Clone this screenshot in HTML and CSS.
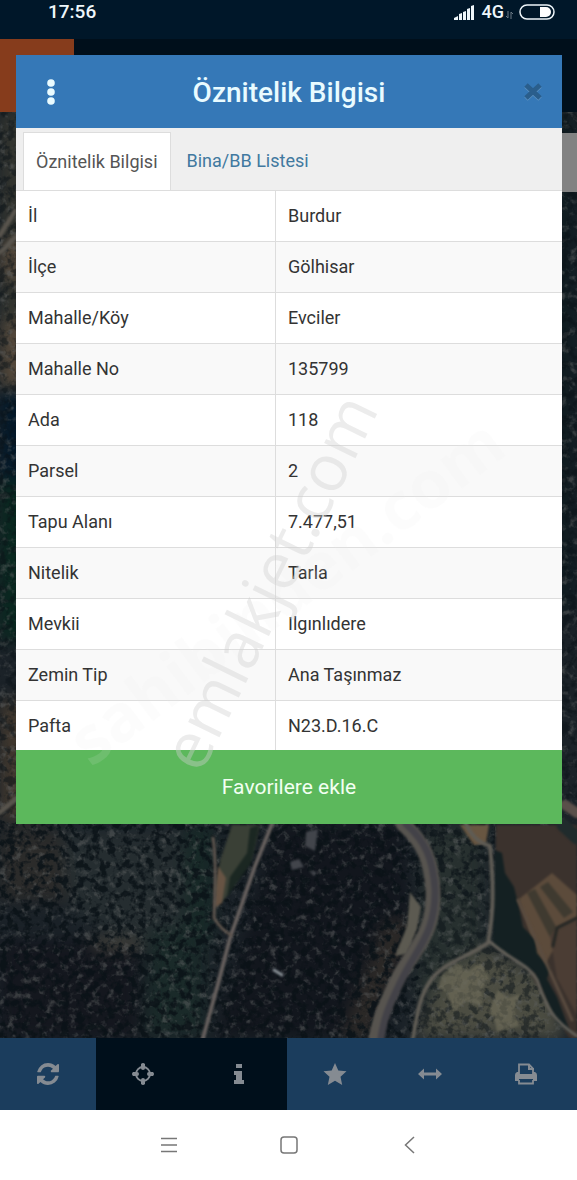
FILE: index.html
```html
<!DOCTYPE html>
<html lang="tr">
<head>
<meta charset="utf-8">
<meta name="viewport" content="width=device-width, initial-scale=1">
<title>Öznitelik Bilgisi</title>
<link rel="stylesheet" href="styles.css">
</head>
<body>
<div class="screen">
  <div class="backdrop">
    <header class="status-bar">
      <span class="clock">17:56</span>
      <span class="indicators">
        <svg class="signal" viewBox="0 0 20 15" aria-hidden="true"><path d="M0 15v-2l4-2v4zM5 15v-6l3-1v7zM9 15V7l3-1v9zM13 15V4l3-1v12zM17 15V1l3-1v15z"/></svg>
        <span class="network">4G</span>
        <svg class="traffic" viewBox="0 0 7 8" aria-hidden="true"><path d="M2 0v7M0 5l2 2M5 8V1l2 2"/></svg>
        <svg class="battery" viewBox="0 0 36 16" aria-hidden="true"><rect x="1" y="1" width="34" height="14" rx="7" fill="none" stroke="#eef6fa" stroke-width="1.5"/><path d="M21 3h6a5 5 0 0 1 0 10h-6z" fill="#fff"/></svg>
      </span>
    </header>
    <div class="app-bar"><div class="app-mark"></div></div>
    <div class="map">
      <svg class="terrain" viewBox="0 112 577 926" preserveAspectRatio="xMidYMid slice" aria-hidden="true">
        <defs>
          <filter id="trees" x="0" y="0" width="100%" height="100%" color-interpolation-filters="sRGB">
            <feTurbulence type="fractalNoise" baseFrequency="0.13" numOctaves="3" seed="7"/>
            <feColorMatrix values="0 0 0 0 .37  0 0 0 0 .38  0 0 0 0 .38  4 0 0 0 -2.1"/>
          </filter>
          <filter id="shade" x="0" y="0" width="100%" height="100%" color-interpolation-filters="sRGB">
            <feTurbulence type="fractalNoise" baseFrequency="0.13" numOctaves="3" seed="21"/>
            <feColorMatrix values="0 0 0 0 .04  0 0 0 0 .07  0 0 0 0 .09  0 5 0 0 -2.3"/>
          </filter>
          <filter id="soft" color-interpolation-filters="sRGB"><feGaussianBlur stdDeviation="8"/></filter>
          <filter id="edge" color-interpolation-filters="sRGB"><feGaussianBlur stdDeviation="0.8"/></filter>
        </defs>
        <rect y="112" width="577" height="926" fill="#1b2228"/>
        <g filter="url(#soft)">
          <path d="M0 112h40v230H0z" fill="#33352f"/>
          <path d="M0 240h30v40H0zM0 320h40v70H0z" fill="#53483a"/>
          <path d="M0 390h35v90H0z" fill="#03192a"/>
          <path d="M0 480h35v160H0z" fill="#08281f"/>
          <path d="M0 700h40v120H0z" fill="#41382e"/>
          <path d="M540 112h37v500h-37z" fill="#101c21"/>
          <path d="M0 830h90v70H0z" fill="#2b2b2a"/>
          <path d="M60 830h120l20 100-60 20-70-40z" fill="#252d30"/>
          <path d="M150 930l55-5v110h-60z" fill="#1a2a29"/>
          <path d="M185 825h28v115h-28z" fill="#172927"/>
          <path d="M0 940h140v98H0z" fill="#14171e"/>
          <path d="M90 938l50 0v12H95z" fill="#49463e"/>
          <path d="M275 825h125l15 120-40 93H215z" fill="#12161d"/>
          <path d="M385 920h30l-45 118h-30z" fill="#2c2927"/>
          <path d="M425 825h60v130l-70 50z" fill="#27302f"/>
          <path d="M440 972l45-25 60 30 20 61H415z" fill="#4c4d42"/>
        </g>
        <rect y="112" width="577" height="926" filter="url(#trees)" opacity=".5"/>
        <rect x="415" y="900" width="130" height="138" filter="url(#shade)" opacity=".5"/>
        <rect y="820" width="420" height="218" filter="url(#shade)" opacity=".85"/>
        <rect x="420" y="820" width="75" height="80" filter="url(#shade)" opacity=".7"/>
        <rect y="112" width="577" height="708" filter="url(#shade)" opacity=".5"/>
        <g filter="url(#edge)">
          <path d="M232 825h28l-8 35-22 32-11 14-5-17 7-31z" fill="#3a4036"/>
          <path d="M250 828l9-3-8 38-24 34 3-20 17-24z" fill="#1b2722"/>
          <path d="M218 866l8 12-4 25-8 5z" fill="#675444"/>
          <path d="M496 825h81v213h-8l-36-60-38-72z" fill="#3b322d"/>
          <path d="M519 899l33-26 25 22v37l-25 20-10 18z" fill="#5c4b3b"/>
          <path d="M527 893l8-4 24 43-8 7zM540 887l8-5 25 30-9 6z" fill="#3f3a30"/>
          <path d="M558 926l19-9v98l-20-37-7-42z" fill="#4b3d34"/>
          <path d="M460 825h29l-3 18-12 2z" fill="#685641"/>
          <path d="M495 850l7 3 3 20 9 14 5 20 4 20 12 12 2 14 13 16-3 10 10 18 14 37-14-12-22-48-42-30z" fill="#142022"/>
          <path d="M410 892l11 15-4 22-10 25-12 2 12-30z" fill="#5c5a51"/>
          <path d="M306 832l12-3-3 22-10-5zM290 862l9-3 5 8-12 3zM309 871l8 1-3 4z" fill="#42454b"/>
          <path d="M443 973l14-10 12 8 12-9 8 17-8 11 3 17-18-6-12 11-7-20-9-4zM498 990l10 8 12-4-6 16 5 16-22 6-3-16-6-3z" fill="#77735f" opacity=".55"/>
        </g>
        <g fill="none" stroke-linecap="round" filter="url(#edge)">
          <path d="M272 824l-17 42-25 72-12 46-15 54" stroke="#655f5d" stroke-width="4"/>
          <path d="M213 838c4 25 2 55 1 80 5 8 9 13 17 17" stroke="#5e554e" stroke-width="3"/>
          <path d="M403 824c20 18 28 35 30 65 2 42-16 57-33 86-17 34-20 44-24 63" stroke="#57544f" stroke-width="15"/>
          <path d="M406 824c20 18 27 35 29 65 1 42-16 57-31 86-17 34-20 44-23 63" stroke="#434248" stroke-width="7"/>
          <path d="M465 822c8 18 18 22 25 24 5 50 2 75-2 97-22 15-45 20-57 37-12 17-14 36-18 58" stroke="#5f5c55" stroke-width="4"/>
          <path d="M489 941c25 22 38 22 48 39 8 22 12 38 40 56" stroke="#625f58" stroke-width="3"/>
          <path d="M518 900l17 38 17 38 20 44" stroke="#5b4d41" stroke-width="3"/>
          <path d="M577 918l-20 10-4 18" stroke="#252724" stroke-width="3"/>
          <path d="M274 970l8 5" stroke="#8b9298" stroke-width="3"/>
          <path d="M0 235l15-24M0 252c8-5 12-14 17-15M0 812l16-13" stroke="#58544d" stroke-width="5"/>
          <path d="M563 825l14 13" stroke="#202b2c" stroke-width="13"/>
          <path d="M565 805l12 8" stroke="#5a4f4a" stroke-width="10"/>
        </g>
      </svg>
      <div class="side-panel"></div>
    </div>
  </div>

  <main class="dialog-layer">
    <section class="dialog" aria-labelledby="dialog-title">
      <header class="dialog-header">
        <button class="icon-button" type="button" aria-label="Menü"><svg class="dots" viewBox="0 0 8 26"><circle cx="4" cy="4" r="3.8"/><circle cx="4" cy="13" r="3.8"/><circle cx="4" cy="22" r="3.8"/></svg></button>
        <h1 id="dialog-title">Öznitelik Bilgisi</h1>
        <button class="icon-button" type="button" aria-label="Kapat"><svg class="close" viewBox="0 0 20 20"><path d="M3 4l14 13M17 4L3 17" stroke="#5d91c0"/><path d="M3 3l14 13M17 3L3 16" stroke="#2a5e8c"/></svg></button>
      </header>
      <nav class="tabs">
        <button class="tab active" type="button">Öznitelik Bilgisi</button>
        <button class="tab" type="button">Bina/BB Listesi</button>
      </nav>
      <table class="attributes">
        <tbody>
          <tr><th scope="row">İl</th><td>Burdur</td></tr>
          <tr><th scope="row">İlçe</th><td>Gölhisar</td></tr>
          <tr><th scope="row">Mahalle/Köy</th><td>Evciler</td></tr>
          <tr><th scope="row">Mahalle No</th><td>135799</td></tr>
          <tr><th scope="row">Ada</th><td>118</td></tr>
          <tr><th scope="row">Parsel</th><td>2</td></tr>
          <tr><th scope="row">Tapu Alanı</th><td>7.477,51</td></tr>
          <tr><th scope="row">Nitelik</th><td>Tarla</td></tr>
          <tr><th scope="row">Mevkii</th><td>Ilgınlıdere</td></tr>
          <tr><th scope="row">Zemin Tip</th><td>Ana Taşınmaz</td></tr>
          <tr><th scope="row">Pafta</th><td>N23.D.16.C</td></tr>
        </tbody>
      </table>
      <button class="favorite" type="button">Favorilere ekle</button>
      <svg class="watermark" viewBox="16 55 546 769" aria-hidden="true">
        <text class="mark-main" transform="translate(201 775) rotate(-64)">emlakjet.com</text>
        <text class="mark-faint" transform="translate(91 768) rotate(-37)">sahibinden.com</text>
      </svg>
    </section>
  </main>
</div>

<nav class="toolbar">
  <button class="tool" type="button" aria-label="Yenile"><svg viewBox="0 0 1536 1536"><path d="M1511 928q0 5-1 7-64 268-268 434.500t-478 166.500q-146 0-282.500-55t-243.500-157l-129 129q-19 19-45 19t-45-19-19-45v-448q0-26 19-45t45-19h448q26 0 45 19t19 45-19 45l-137 137q71 66 161 102t187 36q134 0 250-65t186-179q11-17 53-117 8-23 30-23h192q13 0 22.500 9.500t9.500 22.500zm25-800v448q0 26-19 45t-45 19h-448q-26 0-45-19t-19-45 19-45l138-138q-148-137-349-137-134 0-250 65t-186 179q-11 17-53 117-8 23-30 23h-199q-13 0-22.500-9.500t-9.500-22.500v-7q65-268 270-434.500t480-166.500q146 0 284 55.500t245 156.500l130-129q19-19 45-19t45 19 19 45z"/></svg></button>
  <button class="tool dark" type="button" aria-label="Konum"><svg viewBox="0 0 22 22"><circle cx="11" cy="11" r="7" fill="none" stroke="#858b92" stroke-width="1.8"/><path d="M9 1q2-2 4 0v4q0 2-2 2t-2-2zM9 17q0-2 2-2t2 2v4q-2 2-4 0zM1 9h4q2 0 2 2t-2 2H1q-2-2 0-4zM17 9h4q2 2 0 4h-4q-2 0-2-2t2-2z"/></svg></button>
  <button class="tool dark" type="button" aria-label="Bilgi"><svg viewBox="0 0 22 22"><path d="M8 1h6v4H8zM6 8h8v9h2v4H6v-4h2v-5H6z"/></svg></button>
  <button class="tool" type="button" aria-label="Favoriler"><svg class="star" viewBox="0 0 24 24"><path d="M12 1l3.300 7.400 8.200.9-6 5.500 1.700 8.200-7.200-4.200L4.800 23l1.700-8.200-6-5.500 8.200-.9z"/></svg></button>
  <button class="tool" type="button" aria-label="Ölç"><svg class="measure" viewBox="0 0 26 22"><path d="M1 11l6-5.500v4h12v-4l6 5.500-6 5.500v-4H7v4z"/></svg></button>
  <button class="tool" type="button" aria-label="Yazdır"><svg class="print" viewBox="0 0 24 22"><path d="M5 11V1.500h10l4 4V11M5 17v3.500h14V17" fill="none" stroke="#858b92" stroke-width="1.800"/><path d="M14 1h2v4h4v2h-6zM3 9h2v2h14V9h2q2 1 2 3v6h-4v-2H5v2H1v-6q0-2 2-3z"/></svg></button>
</nav>
<nav class="system-nav">
  <button type="button" aria-label="Son uygulamalar"><svg viewBox="0 0 18 18"><path d="M1 2.500h16M1 9h16M1 15.500h16"/></svg></button>
  <button type="button" aria-label="Ana ekran"><svg viewBox="0 0 18 18"><rect x="1" y="1" width="16" height="16" rx="3"/></svg></button>
  <button type="button" aria-label="Geri"><svg viewBox="0 0 18 18"><path d="M14 1L5.500 9l8.500 8"/></svg></button>
</nav>
</body>
</html>
```

FILE: styles.css
```css
* { box-sizing: border-box; }

body {
  margin: 0;
  min-height: 100vh;
  display: flex;
  flex-direction: column;
  background: #fff;
  color: #333;
  font-family: Roboto, "Noto Sans", sans-serif;
  font-size: 18px;
  line-height: 24px;
}

button {
  margin: 0;
  padding: 0;
  border: 0;
  background: none;
  color: inherit;
  font: inherit;
}

svg { display: block; }

.screen {
  flex: 1;
  display: grid;
  overflow: hidden;
}

.backdrop, .dialog-layer { grid-area: 1 / 1; min-width: 0; }

.backdrop {
  display: flex;
  flex-direction: column;
  background: #000f1b;
}

.status-bar {
  display: flex;
  justify-content: space-between;
  height: 39px;
  padding: 0 22px 0 48px;
  background: #001729;
  color: #eef6fa;
  font-weight: 500;
}

.clock { font-size: 19px; }

.indicators {
  display: flex;
  align-items: center;
  height: 24px;
}

.signal { width: 20px; height: 15px; margin-right: 8px; fill: #eef6fa; }
.traffic { width: 7px; height: 8px; margin: 6px 6px 0 2px; fill: none; stroke: #6c7b86; }
.battery { width: 36px; height: 16px; }

.app-bar { height: 73px; background: #000f1b; }
.app-mark { width: 74px; height: 100%; background: #863c1c; }

.map { position: relative; flex: 1; background: #1b2228; }
.terrain { position: absolute; inset: 0; width: 100%; height: 100%; }

.side-panel {
  position: absolute;
  top: 21px;
  right: 0;
  width: 40px;
  height: 59px;
  background: #828282;
}

.dialog-layer { z-index: 1; padding: 55px 15px 24px 16px; }

.dialog { position: relative; background: #fff; }

.dialog-header {
  display: grid;
  grid-template-columns: 64px 1fr 64px;
  align-items: center;
  height: 73px;
  background: #3578b7;
  color: #e9fbff;
}

.dialog-header h1 {
  margin: 0;
  padding-top: 2px;
  text-align: center;
  font-size: 28px;
  font-weight: 500;
  line-height: 36px;
}

.icon-button {
  display: grid;
  place-items: center;
  height: 72px;
  padding-left: 6px;
}

.dots { width: 8px; height: 26px; fill: #e9fbff; }
.close { width: 20px; height: 20px; fill: none; stroke-width: 5; }

.tabs {
  display: flex;
  height: 63px;
  padding: 4px 7px 0;
  border-bottom: 1px solid #ddd;
  background: #efefef;
}

.tab {
  height: 58px;
  padding: 0 16px;
  color: #41799f;
}

.tab.active {
  padding: 0 12px;
  border: 1px solid #ddd;
  border-bottom: 0;
  background: #fff;
  color: #555;
}

.attributes {
  width: 100%;
  table-layout: fixed;
  border-spacing: 0;
}

.attributes th, .attributes td {
  height: 51px;
  padding: 0 12px;
  border-bottom: 1px solid #ddd;
  font-weight: 400;
  text-align: left;
}

.attributes th { width: 260px; border-right: 1px solid #ddd; }
.attributes tr:nth-child(even) { background: #f9f9f9; }
.attributes tr:last-child th, .attributes tr:last-child td { height: 49px; border-bottom: 0; }

.favorite {
  display: block;
  width: 100%;
  height: 74px;
  background: #5cb85c;
  color: #f2fff2;
  font-size: 21px;
}

.watermark {
  position: absolute;
  inset: 0;
  width: 100%;
  height: 100%;
  pointer-events: none;
}

.mark-main { font: 65px "Open Sans", sans-serif; fill: #d0d0d0; opacity: .4; }
.mark-faint { font: 700 66px "Open Sans", sans-serif; fill: #ececec; opacity: .12; }

.toolbar {
  display: grid;
  grid-template-columns: repeat(6, 1fr);
  height: 72px;
  padding-right: 3px;
  background: #1b3d5d;
}

.tool { display: grid; place-items: center; }
.tool.dark { background: #000f1b; }
.tool svg { width: 22px; height: 22px; fill: #858b92; }
.tool .star { width: 24px; height: 24px; }
.tool .measure { width: 26px; }
.tool .print { width: 24px; }

.system-nav {
  display: flex;
  justify-content: center;
  gap: 102px;
  height: 70px;
}

.system-nav svg {
  width: 18px;
  height: 18px;
  fill: none;
  stroke: #777;
  stroke-width: 1.500;
}
```
